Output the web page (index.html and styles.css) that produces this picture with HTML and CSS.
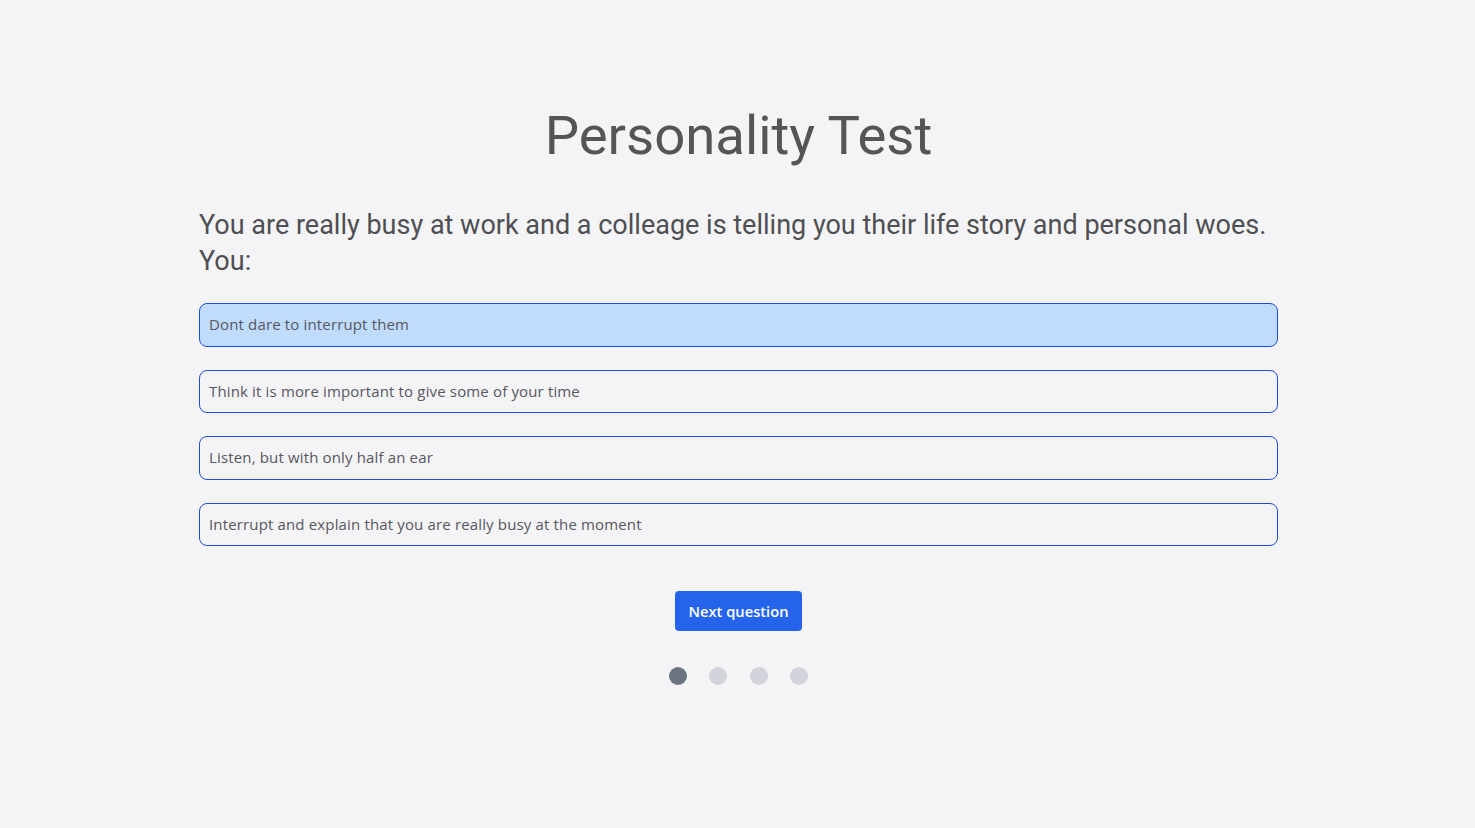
FILE: index.html
```html
<!DOCTYPE html>
<html lang="en">
<head>
<meta charset="utf-8">
<title>Personality Test</title>
<link rel="stylesheet" href="styles.css">
</head>
<body>
<main class="page">
  <h1 class="title">Personality Test</h1>
  <p class="question">You are really busy at work and a colleage is telling you their life story and personal woes. You:</p>
  <div class="options">
    <button class="option selected">Dont dare to interrupt them</button>
    <button class="option">Think it is more important to give some of your time</button>
    <button class="option">Listen, but with only half an ear</button>
    <button class="option">Interrupt and explain that you are really busy at the moment</button>
  </div>
  <div class="actions">
    <button class="next">Next question</button>
  </div>
  <div class="dots">
    <span class="dot active"></span>
    <span class="dot"></span>
    <span class="dot"></span>
    <span class="dot"></span>
  </div>
</main>
</body>
</html>
```

FILE: styles.css
```css
* { box-sizing: border-box; }
html, body { margin: 0; padding: 0; }
body {
  background: #f4f4f6;
  font-family: Roboto, "Liberation Sans", sans-serif;
  color: #525252;
}
.page {
  width: 1079px;
  margin-left: calc(50% - 538.5px);
  padding-top: 100px;
}
.title {
  margin: 0;
  text-align: center;
  font-weight: 400;
  font-size: 54.5px;
  line-height: 70px;
  color: #555555;
}
.question {
  margin: 37px 0 0;
  font-size: 27px;
  line-height: 36px;
  color: #4f4f53;
}
.options {
  margin-top: 24px;
  display: flex;
  flex-direction: column;
  gap: 23px;
}
.option {
  display: block;
  width: 100%;
  height: 43.5px;
  text-align: left;
  padding: 0 9px 1px;
  background: #f4f4f6;
  border: 1px solid #1d4ed8;
  border-radius: 8px;
  font-family: "Open Sans", sans-serif;
  font-size: 15px;
  letter-spacing: 0.15px;
  color: #57575f;
}
.option.selected { background: #bfdbfe; }
.actions {
  display: flex;
  justify-content: center;
  margin-top: 45px;
}
.next {
  width: 127px;
  height: 40px;
  background: #2563eb;
  color: #ffffff;
  border: 0;
  border-radius: 4px;
  font-family: "Open Sans", sans-serif;
  font-size: 14.7px;
  font-weight: 600;
}
.dots {
  display: flex;
  justify-content: center;
  gap: 22.3px;
  margin-top: 36px;
}
.dot {
  width: 18px;
  height: 18px;
  border-radius: 50%;
  background: #d1d5db;
}
.dot.active { background: #6b7280; }
```
